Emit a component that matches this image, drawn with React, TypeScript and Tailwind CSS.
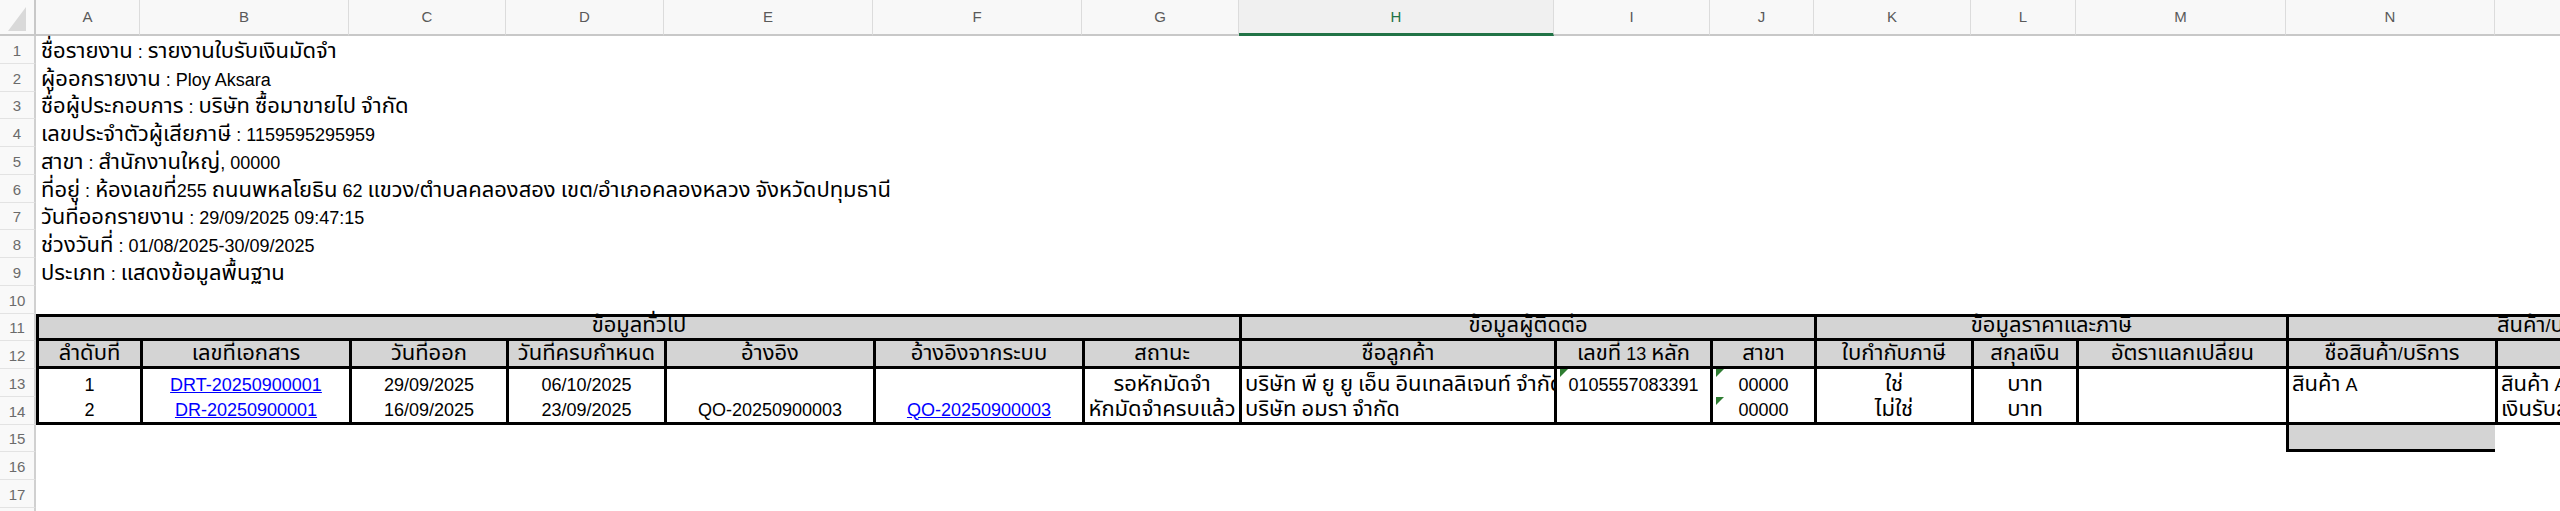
import React from "react";

type Col = { key: string; w: string };

const cols: Col[] = [
  { key: "A", w: "w-[104px]" },
  { key: "B", w: "w-[209px]" },
  { key: "C", w: "w-[157px]" },
  { key: "D", w: "w-[158px]" },
  { key: "E", w: "w-[209px]" },
  { key: "F", w: "w-[209px]" },
  { key: "G", w: "w-[157px]" },
  { key: "H", w: "w-[315px]" },
  { key: "I", w: "w-[156px]" },
  { key: "J", w: "w-[104px]" },
  { key: "K", w: "w-[157px]" },
  { key: "L", w: "w-[105px]" },
  { key: "M", w: "w-[210px]" },
  { key: "N", w: "w-[209px]" },
  { key: "O", w: "w-[209px]" },
];

const info = [
  "ชื่อรายงาน : รายงานใบรับเงินมัดจำ",
  "ผู้ออกรายงาน : Ploy Aksara",
  "ชื่อผู้ประกอบการ : บริษัท ซื้อมาขายไป จำกัด",
  "เลขประจำตัวผู้เสียภาษี : 1159595295959",
  "สาขา : สำนักงานใหญ่, 00000",
  "ที่อยู่ : ห้องเลขที่255 ถนนพหลโยธิน 62 แขวง/ตำบลคลองสอง เขต/อำเภอคลองหลวง จังหวัดปทุมธานี",
  "วันที่ออกรายงาน : 29/09/2025 09:47:15",
  "ช่วงวันที่ : 01/08/2025-30/09/2025",
  "ประเภท : แสดงข้อมูลพื้นฐาน",
];

const headers = [
  "ลำดับที่",
  "เลขที่เอกสาร",
  "วันที่ออก",
  "วันที่ครบกำหนด",
  "อ้างอิง",
  "อ้างอิงจากระบบ",
  "สถานะ",
  "ชื่อลูกค้า",
  "เลขที่ 13 หลัก",
  "สาขา",
  "ใบกำกับภาษี",
  "สกุลเงิน",
  "อัตราแลกเปลี่ยน",
  "ชื่อสินค้า/บริการ",
  "",
];

type Cell = { text: string; align?: "left" | "center"; link?: boolean; flag?: boolean };

const data: Cell[][] = [
  [
    { text: "1" },
    { text: "DRT-20250900001", link: true },
    { text: "29/09/2025" },
    { text: "06/10/2025" },
    { text: "" },
    { text: "" },
    { text: "รอหักมัดจำ" },
    { text: "บริษัท พี ยู ยู เอ็น อินเทลลิเจนท์ จำกัด", align: "left" },
    { text: "0105557083391", flag: true },
    { text: "00000", flag: true },
    { text: "ใช่" },
    { text: "บาท" },
    { text: "" },
    { text: "สินค้า A", align: "left" },
    { text: "สินค้า A", align: "left" },
  ],
  [
    { text: "2" },
    { text: "DR-20250900001", link: true },
    { text: "16/09/2025" },
    { text: "23/09/2025" },
    { text: "QO-20250900003" },
    { text: "QO-20250900003", link: true },
    { text: "หักมัดจำครบแล้ว" },
    { text: "บริษัท อมรา จำกัด", align: "left" },
    { text: "" },
    { text: "00000", flag: true },
    { text: "ไม่ใช่" },
    { text: "บาท" },
    { text: "" },
    { text: "" },
    { text: "เงินรับล่วงหน้า", align: "left" },
  ],
];

// Thai runs render a touch larger so they line up with the sheet's Thai face
function T({ children }: { children: string }) {
  const parts = children.split(/([\u0E00-\u0E7F]+)/);
  return (
    <>
      {parts.map((p, i) =>
        /[\u0E00-\u0E7F]/.test(p) ? (
          <span key={i} className="text-[22px]">
            {p}
          </span>
        ) : (
          <React.Fragment key={i}>{p}</React.Fragment>
        )
      )}
    </>
  );
}

function Flag() {
  return (
    <svg className="absolute left-[3px] top-0" width="8" height="8" viewBox="0 0 8 8">
      <polygon points="0,0 8,0 0,8" fill="#2e7d32" />
    </svg>
  );
}

function RowHead({ n }: { n?: number }) {
  return (
    <div className="w-[36px] shrink-0 flex items-end justify-center pb-[3px] border-r-2 border-b border-r-[#d0d0d0] border-b-[#e3e3e3] bg-[#f9f9f9] text-[15px] leading-[18px] text-[#6b6b6b]">
      {n}
    </div>
  );
}

function Row({ n, children }: { n?: number; children?: React.ReactNode }) {
  return (
    <div className="flex h-[27.75px] shrink-0">
      <RowHead n={n} />
      {children}
    </div>
  );
}

export default function App() {
  return (
    <div className="w-[2560px] h-[511px] overflow-hidden bg-white text-[18px] leading-[24px] text-black font-['Liberation_Sans','Noto_Sans_Thai','Noto_Sans_Thai_UI','Tahoma','Loma','Garuda','Noto_Sans',sans-serif]">
      {/* column letters */}
      <div className="flex h-[36px]">
        <div className="w-[36px] shrink-0 relative bg-[#f9f9f9] border-r-2 border-b-2 border-[#c8c8c8]">
          <svg className="absolute right-[8px] bottom-[3px]" width="18" height="24" viewBox="0 0 18 24">
            <polygon points="0,24 18,24 18,0" fill="#d9d9d9" />
          </svg>
        </div>
        {cols.map((c) =>
          c.key === "H" ? (
            <div
              key={c.key}
              className={`${c.w} shrink-0 flex items-center justify-center bg-[#f0f0f0] border-r border-r-[#dcdcdc] border-b-[3px] border-b-[#217346] text-[15px] text-[#217346]`}
            >
              {c.key}
            </div>
          ) : (
            <div
              key={c.key}
              className={`${c.w} shrink-0 flex items-center justify-center bg-[#f8f8f8] border-r border-r-[#dcdcdc] border-b-2 border-b-[#c8c8c8] text-[15px] text-[#5a5a5a]`}
            >
              {c.key}
            </div>
          )
        )}
        <div className="flex-1 bg-[#f8f8f8] border-b-2 border-b-[#c8c8c8]" />
      </div>

      {/* report info */}
      {info.map((t, i) => (
        <Row key={i} n={i + 1}>
          <div className="flex-1 flex items-end pl-[5px] whitespace-nowrap">
            <span>
              <T>{t}</T>
            </span>
          </div>
        </Row>
      ))}
      <Row n={10} />

      {/* group header */}
      <Row n={11}>
        <div className="w-[1203px] shrink-0 flex items-end justify-center bg-[#d4d4d4] border-l-[3px] border-y-[3px] border-black">
          <span>
            <T>ข้อมูลทั่วไป</T>
          </span>
        </div>
        <div className="w-[575px] shrink-0 flex items-end justify-center bg-[#d4d4d4] border-l-[3px] border-y-[3px] border-black">
          <span>
            <T>ข้อมูลผู้ติดต่อ</T>
          </span>
        </div>
        <div className="w-[472px] shrink-0 flex items-end justify-center bg-[#d4d4d4] border-l-[3px] border-y-[3px] border-black">
          <span>
            <T>ข้อมูลราคาและภาษี</T>
          </span>
        </div>
        <div className="flex-1 flex items-end pl-[208px] whitespace-nowrap bg-[#d4d4d4] border-l-[3px] border-y-[3px] border-black">
          <span>
            <T>สินค้า/บริการ</T>
          </span>
        </div>
      </Row>

      {/* column titles */}
      <Row n={12}>
        {headers.map((h, i) => (
          <div
            key={i}
            className={`${cols[i].w} shrink-0 flex items-end justify-center whitespace-nowrap overflow-hidden bg-[#d4d4d4] border-l-[3px] border-b-[3px] border-black`}
          >
            <span>
              <T>{h}</T>
            </span>
          </div>
        ))}
      </Row>

      {/* data */}
      {data.map((r, ri) => (
        <Row key={ri} n={13 + ri}>
          {r.map((c, ci) => (
            <div
              key={ci}
              className={`${cols[ci].w} shrink-0 relative flex items-end whitespace-nowrap overflow-hidden border-l-[3px] border-black ${
                ri === 1 ? "border-b-[3px]" : ""
              } ${c.align === "left" ? "justify-start pl-[3px]" : "justify-center"}`}
            >
              {c.flag && <Flag />}
              {c.link ? (
                <span className="text-[#0000ff] underline">{c.text}</span>
              ) : (
                <span>
                  <T>{c.text}</T>
                </span>
              )}
            </div>
          ))}
        </Row>
      ))}

      <Row n={15}>
        <div className="w-[2250px] shrink-0" />
        <div className="w-[209px] shrink-0 bg-[#d4d4d4] border-l-[3px] border-b-[3px] border-black" />
      </Row>
      <Row n={16} />
      <Row n={17} />
      <Row />
    </div>
  );
}
